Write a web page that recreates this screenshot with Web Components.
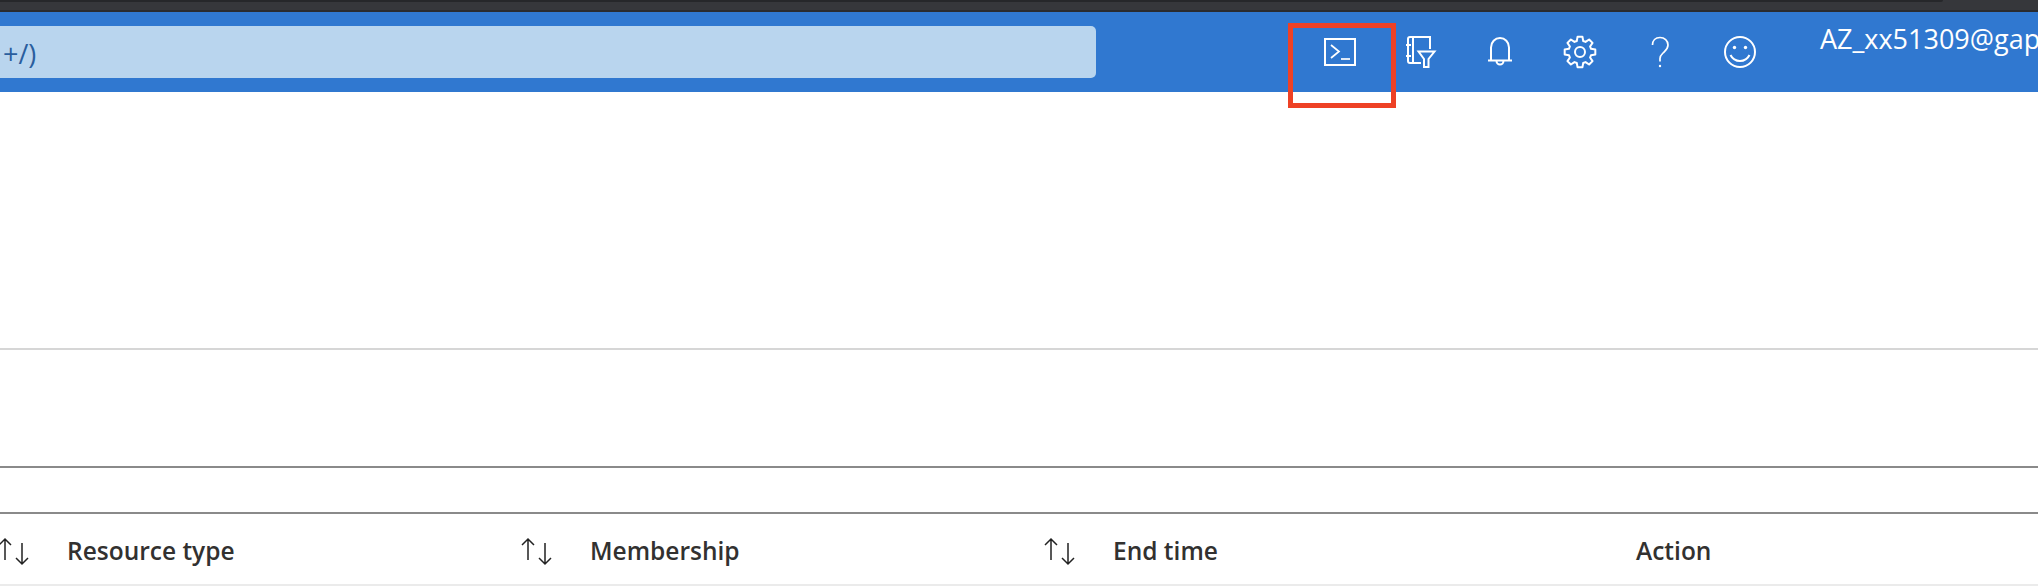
<!DOCTYPE html>
<html lang="en">
<head>
<meta charset="utf-8">
<title>Portal header</title>
<style>
  html, body { margin: 0; padding: 0; background: #fff; }
  body { width: 2038px; height: 586px; overflow: hidden; font-family: "Open Sans", "Noto Sans", sans-serif; }
</style>
</head>
<body>
<az-window-strip></az-window-strip>
<az-topbar user="AZ_xx51309@gap">
  <az-search text="+/)"></az-search>
  <az-icon-button name="terminal" marked></az-icon-button>
  <az-icon-button name="directory"></az-icon-button>
  <az-icon-button name="bell"></az-icon-button>
  <az-icon-button name="gear"></az-icon-button>
  <az-icon-button name="help"></az-icon-button>
  <az-icon-button name="smile"></az-icon-button>
</az-topbar>
<az-band size="258"></az-band>
<az-band size="118" strong></az-band>
<az-band size="46" strong></az-band>
<az-table-head>
  <az-sort-head sortable>Resource type</az-sort-head>
  <az-sort-head sortable>Membership</az-sort-head>
  <az-sort-head sortable>End time</az-sort-head>
  <az-sort-head>Action</az-sort-head>
</az-table-head>

<script>
// ── Icons (40x40 box) ────────────────────────────────────
function gearPath(cx, cy, outer, inner, teeth) {
  const pts = [];
  const step = Math.PI * 2 / teeth;
  for (let i = 0; i < teeth; i++) {
    const a = i * step - Math.PI / 2;
    const at = (r, d) => (cx + r * Math.cos(a + d)).toFixed(2) + ' ' + (cy + r * Math.sin(a + d)).toFixed(2);
    pts.push(at(inner, -step * 0.36), at(outer, -step * 0.2), at(outer, step * 0.2), at(inner, step * 0.36));
  }
  return 'M' + pts.join('L') + 'Z';
}

const ICONS = {
  terminal: `<rect x="5" y="7" width="30" height="26"/>
    <path d="M11 13l8 6.5-8 6.5" stroke-width="1.7"/><path d="M21 27h9" stroke-width="1.7"/>`,
  directory: `<path d="M30 17V5H10a2 2 0 0 0-2 2v22a2 2 0 0 0 2 2h11M13 5v26M6 13h5M6 24h5"/>
    <path d="M18.5 19.5h16l-6 7.5v8h-4.5v-8z"/>`,
  bell: `<path d="M11 28.5V15.5a9 9.5 0 0 1 18 0v13M8 28.5h24M16.5 29a3.5 3.5 0 0 0 7 0"/>`,
  gear: `<path d="${gearPath(20, 20, 15.5, 11.5, 8)}" stroke-linejoin="round"/><circle cx="20" cy="20" r="5"/>`,
  help: `<path d="M12.5 13C12.5 8.5 15.5 5.5 20 5.5s8 3 8 7.5c0 4-2.5 5.5-5 8-1.700 1.600-3 3.500-3 5.500v3" stroke-width="1.700"/>
    <circle cx="20" cy="34" r="1.200" fill="#fff" stroke="none"/>`,
  smile: `<circle cx="20" cy="20" r="15"/><circle cx="14.500" cy="15.500" r="1.700" fill="#fff" stroke="none"/>
    <circle cx="25.500" cy="15.500" r="1.700" fill="#fff" stroke="none"/><path d="M10.500 23c2 4 5.500 6 9.500 6s7.500-2 9.500-6"/>`,
};

class AzWindowStrip extends HTMLElement {
  constructor() {
    super();
    this.attachShadow({ mode: 'open' }).innerHTML = `
      <style>
        :host {
          display: block; height: 10px;
          background: #36373b;
          border-bottom: 2px solid #2a2b2e;
        }
        .edge { width: 1943px; height: 2px; background: #26272a; border-radius: 0 0 2px 0; }
      </style>
      <div class="edge"></div>`;
  }
}

class AzTopbar extends HTMLElement {
  constructor() {
    super();
    const user = this.getAttribute('user') || '';
    this.attachShadow({ mode: 'open' }).innerHTML = `
      <style>
        :host {
          display: flex; height: 80px;
          background: #3078d0;
          color: #fff;
        }
        .icons { display: contents; }
        .user {
          flex: none;
          font-size: 27px; line-height: 32px;
          padding: 11px 0 0 40px;
          white-space: nowrap;
        }
      </style>
      <div class="icons"><slot></slot></div>
      <div class="user">${user}</div>`;
  }
}

class AzSearch extends HTMLElement {
  constructor() {
    super();
    const text = this.getAttribute('text') || '';
    this.attachShadow({ mode: 'open' }).innerHTML = `
      <style>
        :host {
          display: flex; align-items: center; flex: none;
          box-sizing: border-box;
          width: 1096px; height: 52px;
          margin: 14px 204px 0 0;
          padding: 2px 0 0 3px;
          background: #b9d5ee;
          border-radius: 0 5px 5px 0;
          color: #2a5e9e;
          font-size: 27px;
        }
      </style>${text}`;
  }
}

class AzIconButton extends HTMLElement {
  constructor() {
    super();
    const marked = this.hasAttribute('marked');
    const icon = ICONS[this.getAttribute('name')] || '';
    this.attachShadow({ mode: 'open' }).innerHTML = `
      <style>
        :host {
          display: flex; align-items: center; justify-content: center; flex: none;
          position: relative;
          width: 80px; height: 80px;
        }
        svg { display: block; fill: none; stroke: #fff; stroke-width: 2; }
        .mark {
          position: absolute; left: -12px; top: 11px;
          box-sizing: border-box;
          width: 108px; height: 85px;
          border: 5px solid #ee4125;
        }
      </style>
      <svg width="40" height="40" viewBox="0 0 40 40">${icon}</svg>
      ${marked ? '<div class="mark"></div>' : ''}`;
  }
}

// one horizontal section of the empty panel, with its bottom rule
class AzBand extends HTMLElement {
  constructor() {
    super();
    const size = parseInt(this.getAttribute('size')) || 40;
    const rule = this.hasAttribute('strong') ? '#8a8a8a' : '#d6d6d6';
    this.attachShadow({ mode: 'open' }).innerHTML = `
      <style>
        :host {
          display: block; box-sizing: border-box;
          height: ${size}px;
          border-bottom: 2px solid ${rule};
        }
      </style>`;
  }
}

class AzTableHead extends HTMLElement {
  constructor() {
    super();
    this.attachShadow({ mode: 'open' }).innerHTML = `
      <style>
        :host {
          display: grid; box-sizing: border-box;
          grid-template-columns: repeat(4, 523px);
          height: 72px;
          margin-left: -3px;
          padding-top: 3px;
          border-bottom: 2px solid #ebebeb;
        }
      </style>
      <slot></slot>`;
  }
}

class AzSortHead extends HTMLElement {
  constructor() {
    super();
    const sortable = this.hasAttribute('sortable');
    this.attachShadow({ mode: 'open' }).innerHTML = `
      <style>
        :host {
          display: flex; align-items: center;
          color: #323130;
          font-size: 24.5px; font-weight: 600;
          white-space: nowrap;
        }
        svg { display: block; flex: none; margin-right: 38px; fill: none; stroke: #222; stroke-width: 1.500; }
        .plain { padding-left: 70px; }
      </style>
      ${sortable ? `<svg width="32" height="30" viewBox="0 0 32 30">
        <path d="M8 24V3M2 9l6-6 6 6"/><path d="M25 7v21M19 22l6 6 6-6"/>
      </svg>` : ''}
      <span class="${sortable ? '' : 'plain'}"><slot></slot></span>`;
  }
}

customElements.define('az-window-strip', AzWindowStrip);
customElements.define('az-topbar', AzTopbar);
customElements.define('az-search', AzSearch);
customElements.define('az-icon-button', AzIconButton);
customElements.define('az-band', AzBand);
customElements.define('az-table-head', AzTableHead);
customElements.define('az-sort-head', AzSortHead);
</script>
</body>
</html>
